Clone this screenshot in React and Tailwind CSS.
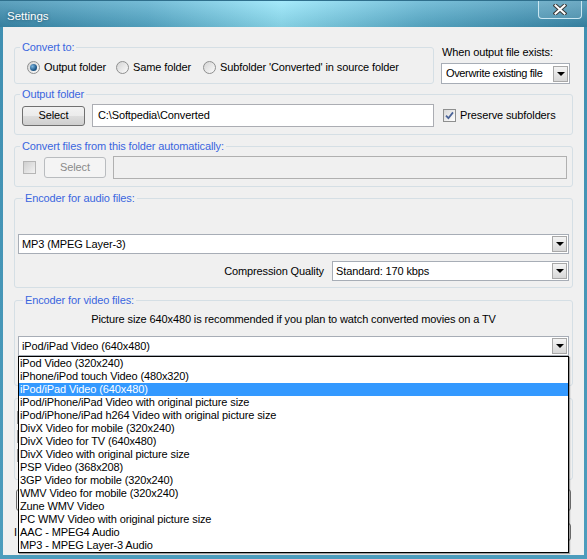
import React from 'react';

const videoItems = [
  'iPod Video (320x240)',
  'iPhone/iPod touch Video (480x320)',
  'iPod/iPad Video (640x480)',
  'iPod/iPhone/iPad Video with original picture size',
  'iPod/iPhone/iPad h264 Video with original picture size',
  'DivX Video for mobile (320x240)',
  'DivX Video for TV (640x480)',
  'DivX Video with original picture size',
  'PSP Video (368x208)',
  '3GP Video for mobile (320x240)',
  'WMV Video for mobile (320x240)',
  'Zune WMV Video',
  'PC WMV Video with original picture size',
  'AAC - MPEG4 Audio',
  'MP3 - MPEG Layer-3 Audio',
];

const Group = ({ label, className = '', children }) => (
  <fieldset className={`border border-[#d5dfe5] rounded-[3px] min-w-0 ${className}`}>
    <legend className="ml-[5px] px-[2px] leading-[13px] text-[#3a66df]">{label}</legend>
    {children}
  </fieldset>
);

const Arrow = () => (
  <span className="w-[15px] h-[16px] mr-[1px] shrink-0 border border-[#a8a8a8] bg-[linear-gradient(180deg,#f4f4f4_0%,#e6e6e6_50%,#d8d8d8_100%)] flex items-center justify-center">
    <span className="w-0 h-0 border-l-[4px] border-r-[4px] border-t-[4px] border-l-transparent border-r-transparent border-t-black" />
  </span>
);

const Combo = ({ text, className = '' }) => (
  <div className={`flex items-center bg-white border border-[#a7adb6] pl-[3px] ${className}`}>
    <span className="flex-1 whitespace-nowrap overflow-hidden">{text}</span>
    <Arrow />
  </div>
);

const Radio = ({ checked, label, className = '' }) => (
  <label className={`flex items-center gap-[4px] ${className}`}>
    <span className="w-[13px] h-[13px] rounded-full border border-[#8e8f8f] bg-[linear-gradient(135deg,#d4d4d4,#fbfbfb)] flex items-center justify-center shrink-0">
      {checked && (
        <span className="w-[7px] h-[7px] rounded-full bg-[radial-gradient(circle_at_35%_35%,#7fb8e0,#1f5a8c_60%,#123d63)]" />
      )}
    </span>
    <span className="whitespace-nowrap">{label}</span>
  </label>
);

const Check = ({ checked, disabled }) => (
  <span
    className={`w-[13px] h-[13px] border shrink-0 flex items-center justify-center ${
      disabled
        ? 'border-[#b5b5b5] bg-[linear-gradient(135deg,#cfcfcf,#f2f2f2)]'
        : 'border-[#8e8f8f] bg-[linear-gradient(135deg,#d8d8d8,#ffffff)]'
    }`}
  >
    {checked && (
      <svg width="9" height="9" viewBox="0 0 9 9">
        <path d="M1 4.6 L3.4 7.2 L8 1.4" stroke="#4a6398" strokeWidth="1.8" fill="none" />
      </svg>
    )}
  </span>
);

const Button = ({ children, disabled, className = '' }) => (
  <button
    className={`rounded-[3px] border shrink-0 ${
      disabled
        ? 'border-[#b9bcbf] bg-[#f4f4f4] text-[#8a8a8a]'
        : 'border-[#707070] bg-[linear-gradient(180deg,#f2f2f2_0%,#ebebeb_50%,#dddddd_50%,#cfcfcf_100%)]'
    } ${className}`}
  >
    {children}
  </button>
);

export default function App() {
  return (
    <div className="relative w-[587px] h-[559px] overflow-hidden bg-[linear-gradient(180deg,#3f8fb1,#4d9dbd)] font-['Liberation_Sans',Arial,sans-serif] text-[11px] leading-[13px] tracking-[-0.12px] text-black">
      {/* title bar */}
      <div className="h-[27px] flex items-start bg-[linear-gradient(180deg,rgba(255,255,255,0.18),rgba(0,0,0,0.1)),linear-gradient(90deg,#3b8db0_0%,#58aece_25%,#92e5fa_48%,#5cb2d1_72%,#3a8bae_100%)] border-t border-[#2f6f8c]">
        <span className="ml-[7px] mt-[9px] text-[11.5px] tracking-normal text-white [text-shadow:0_0_3px_rgba(0,40,60,0.6)]">Settings</span>
        <div className="ml-auto mr-[5px] w-[44px] h-[18px] rounded-b-[4px] border border-t-0 border-[#c9e6f1] bg-[rgba(255,255,255,0.1)] flex items-center justify-center">
          <svg width="14" height="11" viewBox="0 0 14 11">
            <path d="M2.5 1.5 L11.5 9.5 M11.5 1.5 L2.5 9.5" stroke="#3a3a3a" strokeWidth="4" strokeLinecap="square" />
            <path d="M2.5 1.5 L11.5 9.5 M11.5 1.5 L2.5 9.5" stroke="#ffffff" strokeWidth="2" strokeLinecap="square" />
          </svg>
        </div>
      </div>

      {/* client area */}
      <div className="mx-[3px] h-[528px] bg-[#f0f0f0] px-[11px] pt-[14px]">
        <div className="flex items-start">
          <Group label="Convert to:" className="w-[420px] pb-[9px]">
            <div className="mt-[7px] h-[13px] flex items-center pl-[12px]">
              <Radio checked label="Output folder" className="w-[89px]" />
              <Radio label="Same folder" className="w-[87px]" />
              <Radio label="Subfolder 'Converted' in source folder" />
            </div>
          </Group>
          <div className="ml-[7px] w-[129px]">
            <div className="mt-[5px] ml-[1px]">When output file exists:</div>
            <Combo text="Overwrite existing file" className="mt-[4px] h-[21px] pl-[4px] tracking-[-0.35px]" />
          </div>
        </div>

        <Group label="Output folder" className="mt-[4px] pb-[7px]">
          <div className="mt-[3px] h-[23px] flex items-center pl-[7px]">
            <Button className="w-[63px] h-[20px]">Select</Button>
            <div className="ml-[7px] w-[342px] h-[23px] bg-white border border-[#abadb3] flex items-center pl-[5px]">
              C:\Softpedia\Converted
            </div>
            <div className="ml-[9px] flex items-center gap-[4px]">
              <Check checked />
              <span>Preserve subfolders</span>
            </div>
          </div>
        </Group>

        <Group label="Convert files from this folder automatically:" className="mt-[5px] pb-[7px]">
          <div className="mt-[3px] h-[23px] flex items-center pl-[8px]">
            <Check disabled />
            <Button disabled className="ml-[8px] w-[62px] h-[21px]">Select</Button>
            <div className="ml-[7px] w-[454px] h-[23px] border border-[#b0b0b0] bg-[#f0f0f0]" />
          </div>
        </Group>

        <Group label="Encoder for audio files:" className="mt-[5px] pb-[6px] px-[3px]">
          <Combo text="MP3 (MPEG Layer-3)" className="mt-[29px] h-[20px]" />
          <div className="mt-[7px] flex items-center justify-end">
            <span className="mr-[8px]">Compression Quality</span>
            <Combo text="Standard: 170 kbps" className="w-[237px] h-[20px]" />
          </div>
        </Group>

        <Group label="Encoder for video files:" className="mt-[6px] pb-[29px] px-[3px]">
          <div className="mt-[6px] text-center">
            Picture size 640x480 is recommended if you plan to watch converted movies on a TV
          </div>
          <Combo text="iPod/iPad Video (640x480)" className="mt-[10px] h-[20px]" />
        </Group>

        {/* controls below, mostly covered by the open list */}
        <div className="mt-[12px] h-[82px] border border-[#d5dfe5] rounded-[3px] pl-[2px] pt-[12px] flex flex-col gap-[6px]">
          <Check />
          <Check />
          <Check />
        </div>
        <div className="mt-[9px] mx-[2px] h-[22px] border border-[#707070] rounded-[3px]" />
        <div className="mt-[12px] flex items-center h-[18px]">
          <span className="w-[6px]">I</span>
          <div className="flex-1 h-[18px] mr-[2px] border border-[#707070] rounded-[3px]" />
        </div>
      </div>

      {/* open dropdown list */}
      <div className="absolute left-[18px] top-[356px] w-[551px] h-[197px] bg-white border border-black shadow-[1px_1px_1px_rgba(0,0,0,0.35)]">
        {videoItems.map((item, i) => (
          <div
            key={item}
            className={`h-[13px] leading-[13px] pl-[1px] whitespace-nowrap ${
              i === 2 ? 'bg-[#3399ff] text-white' : ''
            }`}
          >
            {item}
          </div>
        ))}
      </div>
    </div>
  );
}
